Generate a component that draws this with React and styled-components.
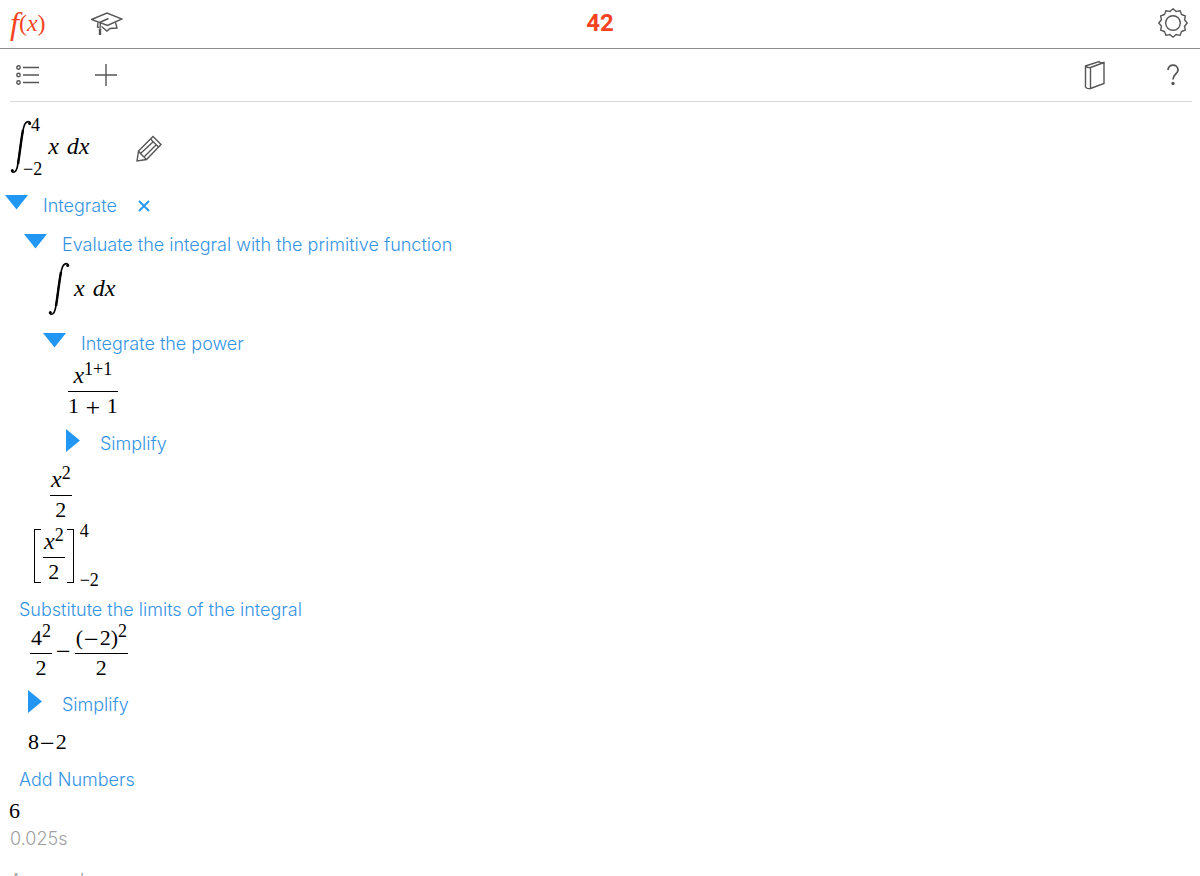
import styled, { createGlobalStyle } from "styled-components";

const GlobalStyle = createGlobalStyle`
  * {
    box-sizing: border-box;
  }

  body {
    margin: 0;
    background: #fff;
    color: #000;
    font-family: Inter, "Liberation Sans", sans-serif;
  }
`

export default function App() {
    return (
        <>
            <GlobalStyle />
            <Page>
                <TopBar>
                    <BarGroup>
                        <FxButton aria-label="Functions"><i>f</i><small>(<i>x</i>)</small></FxButton>
                        <IconButton aria-label="Learn"><CapIcon /></IconButton>
                    </BarGroup>
                    <Title>42</Title>
                    <BarGroup $end>
                        <IconButton aria-label="Settings"><GearIcon /></IconButton>
                    </BarGroup>
                </TopBar>
                <ToolBar>
                    <BarGroup>
                        <IconButton aria-label="List"><ListIcon /></IconButton>
                        <IconButton aria-label="Add"><PlusIcon /></IconButton>
                    </BarGroup>
                    <BarGroup $end>
                        <IconButton aria-label="Manual"><BookIcon /></IconButton>
                        <IconButton aria-label="Help"><HelpIcon /></IconButton>
                    </BarGroup>
                </ToolBar>

                <Sheet>
                    <MathRow $gap={14} $indent={10}>
                        <Integral upper="4" lower="−2" />
                        <Integrand><i>x</i><i>dx</i></Integrand>
                        <EditButton aria-label="Edit"><PencilIcon /></EditButton>
                    </MathRow>

                    <StepRow $gap={16} $indent={5}>
                        <Toggle open />
                        <StepLink href="#integrate">Integrate</StepLink>
                        <CloseButton aria-label="Remove"><CloseIcon /></CloseButton>
                    </StepRow>
                    <StepRow $gap={15} $indent={24}>
                        <Toggle open />
                        <StepLink href="#evaluate">Evaluate the integral with the primitive function</StepLink>
                    </StepRow>
                    <MathRow $gap={5} $indent={48}>
                        <Integral />
                        <Integrand $tight><i>x</i><i>dx</i></Integrand>
                    </MathRow>
                    <StepRow $gap={16} $indent={43}>
                        <Toggle open />
                        <StepLink href="#power">Integrate the power</StepLink>
                    </StepRow>
                    <MathRow $gap={8} $indent={68}>
                        <Fraction top={<><i>x</i><sup>1+1</sup></>} bottom={<>1 <Op>+</Op> 1</>} />
                    </MathRow>
                    <StepRow $gap={16} $indent={62}>
                        <Toggle />
                        <StepLink href="#simplify-power">Simplify</StepLink>
                    </StepRow>
                    <MathRow $gap={12} $indent={50}>
                        <Fraction top={<><i>x</i><sup>2</sup></>} bottom="2" />
                    </MathRow>
                    <MathRow $gap={2} $indent={34}>
                        <Bracket>
                            <Fraction top={<><i>x</i><sup>2</sup></>} bottom="2" />
                        </Bracket>
                        <Limits>
                            <span>4</span>
                            <span>−2</span>
                        </Limits>
                    </MathRow>
                    <StepRow $gap={9} $indent={19}>
                        <StepLink href="#substitute">Substitute the limits of the integral</StepLink>
                    </StepRow>
                    <MathRow $gap={4} $indent={30}>
                        <Fraction top={<>4<sup>2</sup></>} bottom="2" />
                        <Minus>−</Minus>
                        <Fraction top={<>(<Op>−</Op>2)<sup>2</sup></>} bottom="2" />
                    </MathRow>
                    <StepRow $gap={15} $indent={24}>
                        <Toggle />
                        <StepLink href="#simplify-result">Simplify</StepLink>
                    </StepRow>
                    <MathRow $gap={13} $indent={28}><span>8<Op>−</Op>2</span></MathRow>
                    <StepRow $gap={14} $indent={19}>
                        <StepLink href="#add">Add Numbers</StepLink>
                    </StepRow>
                    <MathRow $gap={7} $indent={9}>6</MathRow>
                    <Note $gap={4}>0.025s</Note>
                    <Note $gap={18}>Approval</Note>
                </Sheet>
            </Page>
        </>
    )
}

function Integral({ upper, lower }) {
    return (
        <>
            <IntegralSign viewBox="0 0 22 54" aria-hidden="true">
                <path d="M1.500 51C3.500 53.500 6 52 7.200 47.500C8.800 41 11.500 15 13.800 7C15.200 1.500 18.500 0.500 20.500 3" />
                <path className="stem" d="M8 44C9.500 36 11 20 13 10" />
                <circle cx="2.300" cy="50.600" r="1.500" />
                <circle cx="19.700" cy="3.400" r="1.500" />
            </IntegralSign>
            {upper && (
                <Bounds>
                    <span>{upper}</span>
                    <span>{lower}</span>
                </Bounds>
            )}
        </>
    )
}

function Fraction({ top, bottom }) {
    return (
        <Frac>
            <Numerator>{top}</Numerator>
            <Denominator>{bottom}</Denominator>
        </Frac>
    )
}

function Toggle({ open }) {
    return (
        <ToggleButton aria-label={open ? "Collapse" : "Expand"} aria-expanded={!!open}>
            <svg width="24" height="24" viewBox="0 0 24 24">
                {open ? <path d="M0 1H23L11.500 15.500Z" /> : <path d="M4 -3V20L18 8.500Z" />}
            </svg>
        </ToggleButton>
    )
}

const CapIcon = () => (
    <Icon width="32" height="24" viewBox="0 0 32 24">
        <path d="M0.500 8.500L16 2L31 8L16.500 14.500Z" />
        <path d="M17.500 7.500L9.500 11L9 18" />
        <path d="M7 11.500L6.500 16L8 16.500M10.500 15.500L16 20L19 17.500L26 17L24.500 11.500" />
        <path d="M9 18V24" strokeWidth="2.400" />
    </Icon>
)

// outline with twelve shallow teeth, each flank slightly hollow
const gearPath = Array.from({ length: 12 }, (_, i) => {
    const at = (step, r) => {
        const angle = ((i + step) * Math.PI) / 6 - Math.PI / 2
        return `${16 + r * Math.cos(angle)} ${16 + r * Math.sin(angle)}`
    }
    return `${i ? "L" : "M"}${at(0, 14.2)}L${at(0.3, 12.7)}L${at(0.5, 12)}L${at(0.7, 12.7)}L${at(1, 14.2)}`
}).join("") + "Z"

const GearIcon = () => (
    <Icon width="32" height="32" viewBox="0 0 32 32">
        <path d={gearPath} />
        <circle cx="16" cy="16" r="7.300" />
    </Icon>
)

const ListIcon = () => (
    <Icon width="24" height="20" viewBox="0 0 24 20">
        <circle cx="2.500" cy="2.500" r="1.700" />
        <circle cx="2.500" cy="10" r="1.700" />
        <circle cx="2.500" cy="17.500" r="1.700" />
        <path d="M7 2.500H23M7 10H23M7 17.500H23" />
    </Icon>
)

const PlusIcon = () => (
    <Icon width="24" height="24" viewBox="0 0 24 24">
        <path d="M12 1V23M1 12H23" />
    </Icon>
)

const BookIcon = () => (
    <Icon width="22" height="30" viewBox="0 0 22 30">
        <path d="M1.500 6L15 1.500Q16 3.500 20 2.500V23.500L6.500 28.500Q2.500 29 1.500 27Z" />
        <path d="M1.500 6Q3 8 6.500 7.500L20 2.500M6.500 7.500V28.500" />
    </Icon>
)

const HelpIcon = () => (
    <Icon width="14" height="22" viewBox="0 0 14 22">
        <path d="M2 6C2 -0.500 12 -0.500 12 6C12 10 7 10 7 15.500" strokeWidth="1.800" />
        <circle cx="7" cy="19.500" r="1" fill="#555" />
    </Icon>
)

const PencilIcon = () => (
    <Icon width="28" height="28" viewBox="0 0 28 28">
        <path d="M2 26L3.500 16L18 1.500L26 9.500L11.500 24.500Z" />
        <path d="M3.500 16L5.500 18.500L9 22L11.500 24.500M15.500 4L23.500 12M5.500 18.500L18.500 6.500M9 22L21.500 9.500" />
    </Icon>
)

const CloseIcon = () => (
    <svg width="12" height="12" viewBox="0 0 12 12">
        <path d="M1 1L11 11M11 1L1 11" stroke="#2196f3" strokeWidth="1.800" />
    </svg>
)

const Page = styled.div`
    height: 100vh;
    overflow: hidden;
`

const TopBar = styled.header`
    display: grid;
    grid-template-columns: 1fr auto 1fr;
    align-items: center;
    height: 49px;
    padding: 0 10px 2px;
    border-bottom: 1px solid #8c8c8c;
`

const ToolBar = styled.nav`
    display: flex;
    justify-content: space-between;
    align-items: center;
    height: 53px;
    margin: 0 8px 0 10px;
    padding: 0 2px 0 1px;
    border-bottom: 1px solid #d8d8d8;
`

const BarGroup = styled.div`
    display: flex;
    align-items: center;
    gap: 44px;
    justify-content: ${props => props.$end ? "flex-end" : "flex-start"};
`

const Title = styled.h1`
    margin: 0;
    font-family: Roboto, sans-serif;
    font-size: 24px;
    line-height: 32px;
    font-weight: 700;
    color: #f4431e;
`

const PlainButton = styled.button`
    display: flex;
    align-items: center;
    padding: 0;
    border: 0;
    background: none;
    color: inherit;
    cursor: pointer;
`

const IconButton = styled(PlainButton)`
    justify-content: center;
    width: 34px;
    height: 34px;
`

const FxButton = styled(PlainButton)`
    width: 36px;
    font-family: "Liberation Serif", serif;
    font-size: 32px;
    line-height: 36px;
    color: #f4431e;

    small {
        font-size: 24px;
    }
`

const Icon = styled.svg`
    fill: none;
    stroke: #555;
    stroke-width: 1.4;
`

const Sheet = styled.main`
    display: flex;
    flex-direction: column;
`

const Row = styled.div`
    display: flex;
    flex-shrink: 0;
    align-items: center;
    margin-top: ${props => props.$gap}px;
    padding-left: ${props => props.$indent}px;
`

const MathRow = styled(Row)`
    font-family: "Liberation Serif", serif;
    font-size: 22px;
    line-height: 24px;

    i {
        font-size: 24px;
        line-height: 22px;
    }

    sup {
        font-size: 18px;
        line-height: 0;
        vertical-align: 8px;
    }
`

const StepRow = styled(Row)`
    height: 24px;
`

const IntegralSign = styled.svg`
    width: 22px;
    height: 54px;

    path {
        fill: none;
        stroke: #000;
        stroke-width: 1.6;
    }

    .stem {
        stroke-width: 2.4;
    }
`

const Bounds = styled.div`
    display: flex;
    flex-direction: column;
    justify-content: space-between;
    height: 62px;
    margin-left: -9px;
    font-size: 18px;
    line-height: 18px;

    span:first-child {
        padding-left: 8px;
    }
`

const Integrand = styled.span`
    display: flex;
    gap: 8px;
    padding: 0 0 2px ${props => props.$tight ? 4 : 6}px;
`

const EditButton = styled(PlainButton)`
    margin: 4px 0 0 46px;
`

const ToggleButton = styled(PlainButton)`
    width: 24px;
    margin-right: 14px;

    svg {
        overflow: visible;
        fill: #2196f3;
    }
`

const StepLink = styled.a`
    color: #3494e4;
    font-size: 18px;
    line-height: 24px;
    font-weight: 300;
    text-decoration: none;
`

const CloseButton = styled(PlainButton)`
    margin-left: 21px;
`

const Frac = styled.div`
    display: flex;
    flex-direction: column;
    text-align: center;
`

const Numerator = styled.div`
    height: 28px;
    padding: 0 1px;
    border-bottom: 1px solid #000;
`

const Denominator = styled.div`
    height: 24px;
    line-height: 28px;
`

const Bracket = styled.div`
    display: flex;
    padding: 1px 8px;
    background:
        linear-gradient(#000, #000) left top / 6px 1px,
        linear-gradient(#000, #000) left bottom / 6px 1px,
        linear-gradient(#000, #000) right top / 6px 1px,
        linear-gradient(#000, #000) right bottom / 6px 1px;
    background-repeat: no-repeat;
    border: solid #000;
    border-width: 0 1px;
`

const Limits = styled.div`
    display: flex;
    flex-direction: column;
    justify-content: space-between;
    height: 67px;
    padding-left: 6px;
    font-size: 18px;
    line-height: 18px;
`

const Op = styled.span`
    padding: 0 1px;
    font-size: 26px;
    line-height: 0;
    vertical-align: -3px;
`

const Minus = styled(Op)`
    padding: 0 4px;
`

const Note = styled.p`
    flex-shrink: 0;
    margin: ${props => props.$gap}px 0 0 10px;
    color: #a0a0a0;
    font-size: 18px;
    line-height: 24px;
    font-weight: 300;
`
